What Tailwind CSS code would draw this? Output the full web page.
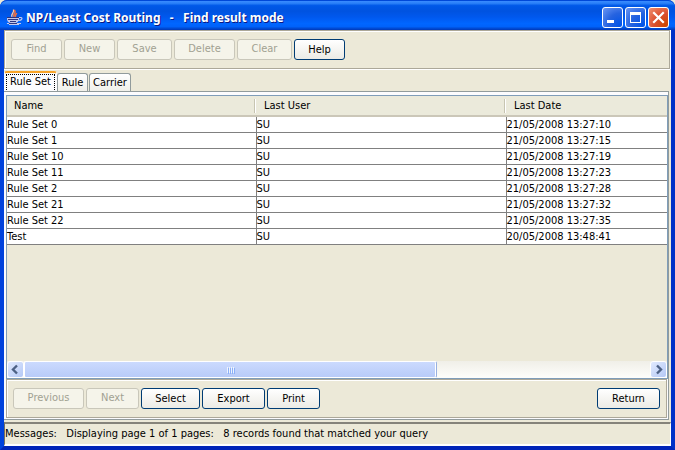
<!DOCTYPE html>
<html lang="en">
<head>
  <meta charset="UTF-8" />
  <meta name="viewport" content="width=device-width, initial-scale=1" />
  <title>NP/Least Cost Routing</title>
  <script src="https://cdn.jsdelivr.net/npm/@tailwindcss/browser@4"></script>
</head>
<body class="bg-[#ece9d8] font-['DejaVu_Sans_Condensed','DejaVu_Sans',sans-serif] font-stretch-condensed text-[11px] leading-[14px] text-black">
  <div class="min-h-screen flex flex-col rounded-t-[7px] bg-linear-to-b from-[#0050e0] to-[#0042e0]">

    <!-- Title bar -->
    <header class="h-[30px] shrink-0 flex items-center gap-[2px] px-[6px] pt-1 rounded-t-[7px] border-t border-[#0048d8] bg-[linear-gradient(to_bottom,#3a8bff_0%,#2a80f8_8%,#0058e8_16%,#0053e0_35%,#0058ee_55%,#0066ff_78%,#0062fa_88%,#0045cc_96%,#0038b8_100%)]">
      <svg class="size-[18px] shrink-0" viewBox="0 0 18 18" fill="none">
        <path d="M6 8C4 5 9 4 7.500 0.500" stroke="#ffc8a8" stroke-width="1.400" />
        <path d="M8 8c-2-3 3-3.500 0.500-7M9.500 8c-1-2 1-2.500 1-4" stroke="#f07040" stroke-width="1.500" />
        <path d="M1 8h12v2c0 2-1.500 4-4 4H5c-2.500 0-4-2-4-4z" fill="#c4c8ec" />
        <path d="M1 8.500h12M2 10.500h10M4 12.500h6" stroke="#2c3480" />
        <path d="M13 8.500h2c1.500 0 1.500 3-2.500 3" stroke="#c4c8ec" stroke-width="1.200" />
        <path d="M1 14h14v1H1z" fill="#c4c8ec" />
        <path d="M3 14h8v1H3z" fill="#2c3480" />
        <path d="M3 15h10v1H3z" fill="#c4c8ec" />
      </svg>
      <h1 class="flex-1 whitespace-pre font-['Noto_Sans','Open_Sans',sans-serif] text-[12px] leading-[18px] font-bold text-white [text-shadow:1px_1px_#0a1883]">NP/Least Cost Routing   -   Find result mode</h1>
      <button type="button" aria-label="Minimize" class="size-[21px] rounded-[3px] border border-white bg-[radial-gradient(circle_at_90%_90%,#0054e9,#2663e0_50%,#6c97f4)]">
        <svg class="size-[19px]" viewBox="0 0 19 19"><path d="M4 12h7v3H4z" fill="#fff" /></svg>
      </button>
      <button type="button" aria-label="Maximize" class="size-[21px] rounded-[3px] border border-white bg-[radial-gradient(circle_at_90%_90%,#0054e9,#2663e0_50%,#6c97f4)]">
        <svg class="size-[19px]" viewBox="0 0 19 19"><path d="M4 4h11v11H4zM5 7v7h9V7z" fill="#fff" fill-rule="evenodd" /></svg>
      </button>
      <button type="button" aria-label="Close" class="size-[21px] rounded-[3px] border border-white bg-[radial-gradient(circle_at_90%_90%,#cc4600,#dc5030_50%,#f09070)]">
        <svg class="size-[19px]" viewBox="0 0 19 19"><path d="M5 5l9 9M14 5l-9 9" stroke="#fff" stroke-width="2.200" stroke-linecap="square" /></svg>
      </button>
    </header>

    <div class="flex-1 flex flex-col border-x-4 border-b-4 border-l-[#0042dc] border-r-[#0030c8] border-b-[#0024b8] bg-[#ece9d8]">

      <!-- Toolbar -->
      <div class="border border-[#aca899] shadow-[inset_1px_1px_#fff,0_1px_#fff,1px_0_#fff] mr-px flex gap-[2px] px-[6px] py-2">
        <button type="button" disabled class="h-[21px] w-[51px] rounded-[3px] border border-[#c9c7ba] bg-[#f5f4ea] pb-[2px] text-[#a1a192]">Find</button>
        <button type="button" disabled class="h-[21px] w-[51px] rounded-[3px] border border-[#c9c7ba] bg-[#f5f4ea] pb-[2px] text-[#a1a192]">New</button>
        <button type="button" disabled class="h-[21px] w-[55px] rounded-[3px] border border-[#c9c7ba] bg-[#f5f4ea] pb-[2px] text-[#a1a192]">Save</button>
        <button type="button" disabled class="h-[21px] w-[61px] rounded-[3px] border border-[#c9c7ba] bg-[#f5f4ea] pb-[2px] text-[#a1a192]">Delete</button>
        <button type="button" disabled class="h-[21px] w-[55px] rounded-[3px] border border-[#c9c7ba] bg-[#f5f4ea] pb-[2px] text-[#a1a192]">Clear</button>
        <button type="button" class="h-[21px] w-[51px] rounded-[3px] border border-[#003c74] bg-linear-to-b from-white to-[#ecebe5]">Help</button>
      </div>

      <!-- Tabs -->
      <nav role="tablist" class="h-[22px] flex items-end">
        <button type="button" role="tab" aria-selected="true" class="-mb-px h-[21px] w-[53px] rounded-t-[3px] border-x border-t-2 border-x-[#fcfcfe] border-t-[#f8a428] bg-[#fcfcfe] px-px"><span class="block h-[18px] border border-dotted border-black leading-[14px]">Rule Set</span></button>
        <button type="button" role="tab" aria-selected="false" class="h-[18px] w-[31px] rounded-t-[3px] border border-b-0 border-[#919b9c] bg-linear-to-b from-white to-[#f0f0ea]">Rule</button>
        <button type="button" role="tab" aria-selected="false" class="ml-px h-[18px] w-[42px] rounded-t-[3px] border border-b-0 border-[#919b9c] bg-linear-to-b from-white to-[#f0f0ea]">Carrier</button>
      </nav>

      <!-- Tab page -->
      <main class="flex-1 flex flex-col mr-[2px] border-t border-r border-b border-[#919b9c] pt-[3px] pl-[2px] bg-[#fcfcfe]">
        <section class="flex-1 flex flex-col border border-[#7f9db9] bg-[#ece9d8]">
          <table class="w-full table-fixed border-collapse bg-white text-left">
            <thead>
              <tr class="h-[20px] bg-[#ebeadb] border-b-2 border-[#cbc7b8]">
                <th class="w-[249px] font-normal px-0"><div class="h-[14px] border-r border-[#c7c5b2] shadow-[1px_0_#fff] mr-px pl-[7px]">Name</div></th>
                <th class="w-[250px] font-normal px-0"><div class="h-[14px] border-r border-[#c7c5b2] shadow-[1px_0_#fff] mr-px pl-2">Last User</div></th>
                <th class="font-normal px-0"><div class="pl-2">Last Date</div></th>
              </tr>
            </thead>
            <tbody id="rows"></tbody>
          </table>
          <div class="flex-1"></div>

          <!-- Horizontal scroll bar -->
          <div class="h-[17px] flex bg-linear-to-b from-[#f0efe8] to-[#fefefb]">
            <button type="button" aria-label="Scroll left" class="size-[17px] rounded-[3px] border border-white bg-linear-to-br from-[#e1eafe] to-[#b4c8f6]">
              <svg class="size-[15px]" viewBox="0 0 15 15" fill="none"><path d="M9 3.500L5 7.500l4 4" stroke="#4d6185" stroke-width="2.400" /></svg>
            </button>
            <div class="w-[413px] flex items-center justify-center gap-px rounded-[2px] border border-white border-r-[#98b0e0] shadow-[inset_-1px_0_#fff] bg-linear-to-b from-[#cbdafe] to-[#b8cbf8]">
              <i class="w-px h-[6px] bg-[#eef4fe] shadow-[1px_1px_#8cb0f8]"></i>
              <i class="w-px h-[6px] bg-[#eef4fe] shadow-[1px_1px_#8cb0f8]"></i>
              <i class="w-px h-[6px] bg-[#eef4fe] shadow-[1px_1px_#8cb0f8]"></i>
              <i class="w-px h-[6px] bg-[#eef4fe] shadow-[1px_1px_#8cb0f8]"></i>
            </div>
            <button type="button" aria-label="Scroll right" class="ml-auto size-[17px] rounded-[3px] border border-white bg-linear-to-br from-[#e1eafe] to-[#b4c8f6]">
              <svg class="size-[15px]" viewBox="0 0 15 15" fill="none"><path d="M6 3.500l4 4-4 4" stroke="#4d6185" stroke-width="2.400" /></svg>
            </button>
          </div>
        </section>

        <!-- Paging and record actions -->
        <div class="flex gap-[2px] border border-[#aca899] shadow-[inset_1px_1px_#fff] mb-px mr-px px-[6px] py-2 bg-[#ece9d8]">
          <button type="button" disabled class="h-[21px] w-[71px] rounded-[3px] border border-[#c9c7ba] bg-[#f5f4ea] pb-[2px] text-[#a1a192]">Previous</button>
          <button type="button" disabled class="h-[21px] w-[53px] rounded-[3px] border border-[#c9c7ba] bg-[#f5f4ea] pb-[2px] text-[#a1a192]">Next</button>
          <button type="button" class="h-[21px] w-[59px] rounded-[3px] border border-[#003c74] bg-linear-to-b from-white to-[#ecebe5]">Select</button>
          <button type="button" class="h-[21px] w-[63px] rounded-[3px] border border-[#003c74] bg-linear-to-b from-white to-[#ecebe5]">Export</button>
          <button type="button" class="h-[21px] w-[53px] rounded-[3px] border border-[#003c74] bg-linear-to-b from-white to-[#ecebe5]">Print</button>
          <button type="button" class="ml-auto h-[21px] w-[63px] rounded-[3px] border border-[#003c74] bg-linear-to-b from-white to-[#ecebe5]">Return</button>
        </div>
      </main>

      <!-- Status line -->
      <footer class="mt-[2px] h-[24px] flex items-center whitespace-pre border border-t-2 border-b-2 border-l-[#716f64] border-t-[#85837a] border-r-white border-b-white">Messages:   Displaying page 1 of 1 pages:   8 records found that matched your query</footer>
    </div>
  </div>

  <script>
    const records = [
      ['Rule Set 0', 'SU', '21/05/2008 13:27:10'],
      ['Rule Set 1', 'SU', '21/05/2008 13:27:15'],
      ['Rule Set 10', 'SU', '21/05/2008 13:27:19'],
      ['Rule Set 11', 'SU', '21/05/2008 13:27:23'],
      ['Rule Set 2', 'SU', '21/05/2008 13:27:28'],
      ['Rule Set 21', 'SU', '21/05/2008 13:27:32'],
      ['Rule Set 22', 'SU', '21/05/2008 13:27:35'],
      ['Test', 'SU', '20/05/2008 13:48:41']
    ];

    // Fill the result table
    document.getElementById('rows').innerHTML = records.map(function (record) {
      return '<tr class="h-[16px] border-b border-[#808080]">' +
        '<td class="p-0 pt-px">' + record[0] + '</td>' +
        '<td class="p-0 pt-px border-l border-[#808080]">' + record[1] + '</td>' +
        '<td class="p-0 pt-px border-l border-[#808080]">' + record[2] + '</td>' +
        '</tr>';
    }).join('');
  </script>
</body>
</html>
